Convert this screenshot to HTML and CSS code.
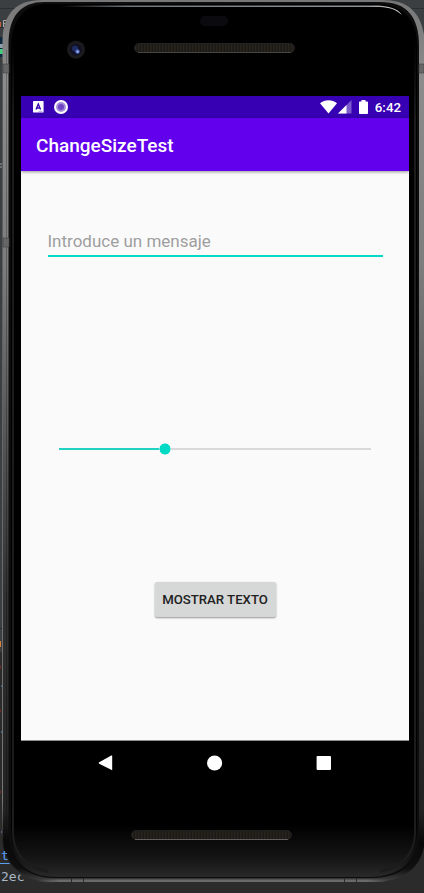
FILE: index.html
```html
<!DOCTYPE html>
<html lang="es">
<head>
<meta charset="utf-8">
<title>ChangeSizeTest</title>
<link rel="stylesheet" href="styles.css">
</head>
<body>
<div class="desktop">
  <svg class="chassis" width="424" height="893" viewBox="0 0 424 893" aria-hidden="true">
    <defs>
      <linearGradient id="metal" x1="0" y1="0" x2="0" y2="1">
        <stop offset="0" stop-color="#777"/><stop offset=".09" stop-color="#8c8c8c"/>
        <stop offset=".3" stop-color="#7d7d7d"/><stop offset=".5" stop-color="#555"/>
        <stop offset=".68" stop-color="#303030"/><stop offset=".92" stop-color="#222"/>
        <stop offset=".955" stop-color="#080808"/><stop offset=".985" stop-color="#101010"/><stop offset="1" stop-color="#444"/>
      </linearGradient>
      <linearGradient id="edge" x1="0" y1="0" x2="0" y2="1">
        <stop offset="0" stop-color="#555"/><stop offset=".9" stop-color="#777"/>
        <stop offset=".96" stop-color="#111"/><stop offset="1" stop-color="#333"/>
      </linearGradient>
      <linearGradient id="glass" x1="0" y1="0" x2="0" y2="1">
        <stop offset="0" stop-color="#000"/><stop offset=".94" stop-color="#000"/>
        <stop offset=".98" stop-color="#161616"/><stop offset="1" stop-color="#292929"/>
      </linearGradient>
      <linearGradient id="rim" x1="0" y1="0" x2="0" y2="1">
        <stop offset="0" stop-color="#1c1c1c" stop-opacity="0"/><stop offset=".1" stop-color="#1c1c1c"/>
        <stop offset="1" stop-color="#1c1c1c"/>
      </linearGradient>
      <linearGradient id="shine" x1="0" y1="0" x2="1" y2="0">
        <stop offset="0" stop-color="#70767b" stop-opacity="0"/><stop offset=".2" stop-color="#70767b"/>
        <stop offset=".9" stop-color="#8e9295"/><stop offset="1" stop-color="#ddd"/>
      </linearGradient>
      <linearGradient id="base" x1="0" y1="0" x2="1" y2="0">
        <stop offset="0" stop-color="#666" stop-opacity="0"/><stop offset=".06" stop-color="#6a6a6a"/>
        <stop offset=".94" stop-color="#6a6a6a"/><stop offset="1" stop-color="#666" stop-opacity="0"/>
      </linearGradient>
      <pattern id="mesh" x="0" y="1" width="3" height="8" patternUnits="userSpaceOnUse">
        <rect width="3" height="8" fill="#1b1916"/><rect width="1.500" height="8" fill="#28251f"/>
      </pattern>
    </defs>
    <rect width="424" height="652" fill="#3c3f41"/>
    <rect y="652" width="424" height="241" fill="#2b2b2b"/>
    <path d="M0 8.500H20M405 8.500H424M0 27.500H8" stroke="#2c2f31"/>
    <path d="M0 628.500H3" stroke="#2b2b2b"/>
    <path d="M.5 22V27" stroke="#c75b3c"/><path d="M3.500 27V20.500H7M3.500 23.500H6" stroke="#aaa" fill="none"/>
    <rect y="37" width="3" height="20" fill="#0d293e"/>
    <rect y="44" width="3" height="4" fill="#8c9fab"/>
    <rect y="49" width="3" height="5" fill="#41cf7c"/>
    <path d="M0 164h2M0 167h2" stroke="#a0a0a0"/>
    <rect y="641" width="1" height="6" fill="#d78337"/>
    <path d="M0 667h1M0 711h1M0 792h1" stroke="#712c29" stroke-width="3"/>
    <path d="M1 686h1M1 732h1M1 832h1" stroke="#486585" stroke-width="2"/>

    <path d="M2.500 40C3 14 16 0 42 0H382C410 0 423 14 425 44V838C424 865 406 882 374 882H54C21 882 2.500 863 2.500 836Z" fill="url(#metal)"/>
    <path d="M2.500 60V836C2.500 863 21 882.500 54 882.500" fill="none" stroke="url(#edge)"/>
    <path d="M6.500 50V825" stroke="#000" stroke-opacity=".25"/>
    <path d="M8.500 44C8.500 15 22 2 44 2H380C407 2 419 17 419 46V836C419 862 402 878 372 878H54C27 878 8.500 862 8.500 834Z" fill="#0d0d0d"/>
    <path d="M11 48C11 19 25 4 47 4H375C403 4 417 19 417 46V836C417 861 399 877 370 877H56C28 877 11 862 11 834Z" fill="url(#glass)"/>
    <path d="M12 40H14V832C14 851 25 866 48 870V873C24 869 12 853 12 832Z" fill="url(#rim)"/>
    <path d="M416 40H414V832C414 851 403 866 380 870V873C404 869 416 853 416 832Z" fill="url(#rim)"/>
    <path d="M60 5.500H372C389 5.500 397 8 402 15L398 12C390 7 384 7 372 7H60Z" fill="url(#shine)"/>
    <rect x="38" y="879.500" width="350" height="2.500" fill="url(#base)"/>
    <path d="M3 64h6v9H3zM3 238h6v9H3zM419 64h5v9h-5z" fill="#666" stroke="#444" stroke-width=".6"/>
    <path d="M71.500 878V882M83.500 878V882M344.500 878V882M356.500 878V882" stroke="#292929"/>

    <rect x="200" y="16" width="28" height="10" rx="5" fill="#0a0a0f"/>
    <circle cx="76" cy="49.700" r="9" fill="#1c1a1d"/>
    <circle cx="76" cy="49.700" r="5.800" fill="#101023"/>
    <circle cx="75" cy="48.500" r="3" fill="#1f2c62"/>
    <circle cx="77.500" cy="51.500" r="2.200" fill="#5269bb"/>
    <circle cx="77.700" cy="51.800" r="1" fill="#a9bcff"/>
    <rect x="134.500" y="43.500" width="160" height="9" rx="4.500" fill="url(#mesh)" stroke="#252321"/>
    <path d="M138 52.500H291" stroke="#46433e"/>
    <rect x="131.500" y="830.500" width="160" height="9" rx="4.500" fill="url(#mesh)" stroke="#202020"/>
    <path d="M135 839.500H288" stroke="#606060"/>
  </svg>
  <div class="code"><span class="code-link">t</span><span class="code-text">2ec</span></div>

  <main class="screen">
    <header class="status">
      <div class="notifications">
        <svg width="11" height="12" viewBox="0 0 11 12"><rect width="10.600" height="11.600" rx=".7" fill="#fff"/><path d="M3 8.500L5.300 3L7.600 8.500M3.800 7H6.800" fill="none" stroke="#3700b3" stroke-width="1.300"/><path d="M5.500 10.300H9.500" stroke="#3700b3" stroke-width=".7" opacity=".5"/></svg>
        <svg width="14" height="14" viewBox="0 0 14 14"><circle cx="7" cy="7" r="7" fill="#fff"/><circle cx="7" cy="7" r="4.900" fill="#a58bdb"/><circle cx="7" cy="7" r="3" fill="#6e45c6"/></svg>
      </div>
      <div class="indicators">
        <svg class="wifi" width="17" height="14" viewBox="0 0 17 14"><path d="M0 3.200C4.500-.7 12.500-.7 17 3.200L8.500 13.600Z" fill="#fff"/></svg>
        <svg class="signal" width="14" height="14" viewBox="0 0 14 14"><path d="M0 13.500L13.500 0V13.500Z" fill="#7d5bcc"/><path d="M0 13.500L8.500 5V13.500Z" fill="#fff"/></svg>
        <svg class="battery" width="9" height="14" viewBox="0 0 9 14"><path d="M2.500 0H6.500V1.500H8.200Q9 1.500 9 2.300V13.200Q9 14 8.200 14H.8Q0 14 0 13.200V2.300Q0 1.500 .8 1.500H2.500Z" fill="#fff"/></svg>
        <span class="clock">6:42</span>
      </div>
    </header>
    <div class="appbar"><h1 class="title">ChangeSizeTest</h1></div>
    <section class="content">
      <div class="field">Introduce un mensaje</div>
      <div class="slider"><span class="fill"></span><span class="thumb"></span><span class="rest"></span></div>
      <button class="show">MOSTRAR TEXTO</button>
    </section>
  </main>
  <nav class="nav">
    <svg width="16" height="16" viewBox="0 0 16 16"><path d="M14.200 .8V15.200L1.200 8.700Q.2 8 1.200 7.300L13.300 .6Q14.200 .2 14.200 .8Z" fill="#fff"/></svg>
    <svg width="16" height="16" viewBox="0 0 16 16"><circle cx="7.600" cy="8" r="7.600" fill="#fff"/></svg>
    <svg width="16" height="16" viewBox="0 0 16 16"><rect x=".6" y=".9" width="14.400" height="14.100" rx=".9" fill="#fff"/></svg>
  </nav>
</div>
</body>
</html>
```
FILE: styles.css
```css
* { box-sizing: border-box; }
body { margin: 0; background: #2b2b2b; font-family: Roboto, sans-serif; overflow: hidden; }
.desktop { position: relative; width: 424px; height: 893px; padding: 96px 15px 0 21px; overflow: hidden; isolation: isolate; }
.chassis { position: absolute; inset: 0; z-index: -1; }
.code { position: absolute; left: 0; top: 848px; z-index: -1; width: 30px; font: 13px/18px "DejaVu Sans Mono", monospace; clip-path: polygon(0 0, 6px 0, 10px 17px, 24px 30px, 24px 40px, 0 40px); }
.code-link { display: block; height: 16px; padding-left: 1px; color: #589df6; border-bottom: 1px solid #589df6; line-height: 15px; }
.code-text { display: block; margin-top: 4px; padding-left: 1px; color: #a9b7c6; }
.screen { width: 388px; height: 645px; display: flex; flex-direction: column; background: #fafafa; border-bottom: 1px solid #8b908b; }
.status { height: 22px; flex: none; display: flex; justify-content: space-between; background: #3700b3; padding: 0 8px 0 11.5px; }
.notifications, .indicators { display: flex; align-items: center; }
.notifications { gap: 10px; }
.wifi { margin-right: 1px; }
.signal { margin-right: 7px; }
.battery { margin-right: 7px; }
.clock { color: #fff; font-size: 13.3px; font-weight: 500; line-height: 22px; padding-top: 1px; }
.appbar { height: 53px; flex: none; display: flex; align-items: center; padding-left: 15px; background: #6200ee; box-shadow: 0 1px 3px rgba(0, 0, 0, .4); }
.title { margin: 3px 0 0; color: #fff; font-size: 19px; font-weight: 500; line-height: 24px; }
.content { flex: 1; display: flex; flex-direction: column; padding: 56px 26.5px 0 26.5px; }
.field { height: 30px; padding-top: 4px; border-bottom: 2px solid #03dac5; color: #9e9e9e; font-size: 17px; line-height: 20px; }
.slider { height: 12px; margin: 186px 11.5px 0 11px; display: flex; align-items: center; }
.fill { width: 100.5px; height: 2px; background: #20d2c1; }
.thumb { width: 12px; height: 12px; border-radius: 50%; background: radial-gradient(circle, #03dac5 5.2px, transparent 5.9px); }
.rest { flex: 1; height: 2px; background: #d9d9d9; }
.show { width: 121px; height: 35px; margin: 127px 0 0 107px; padding: 0; border: 0; border-radius: 2px; background: #d6d7d7; box-shadow: 0 1px 2px rgba(0, 0, 0, .4); color: #212121; font: 500 13.2px/35px Roboto, sans-serif; white-space: nowrap; }
.nav { width: 388px; display: flex; justify-content: space-between; padding: 14px 77px 0 77px; }
```
